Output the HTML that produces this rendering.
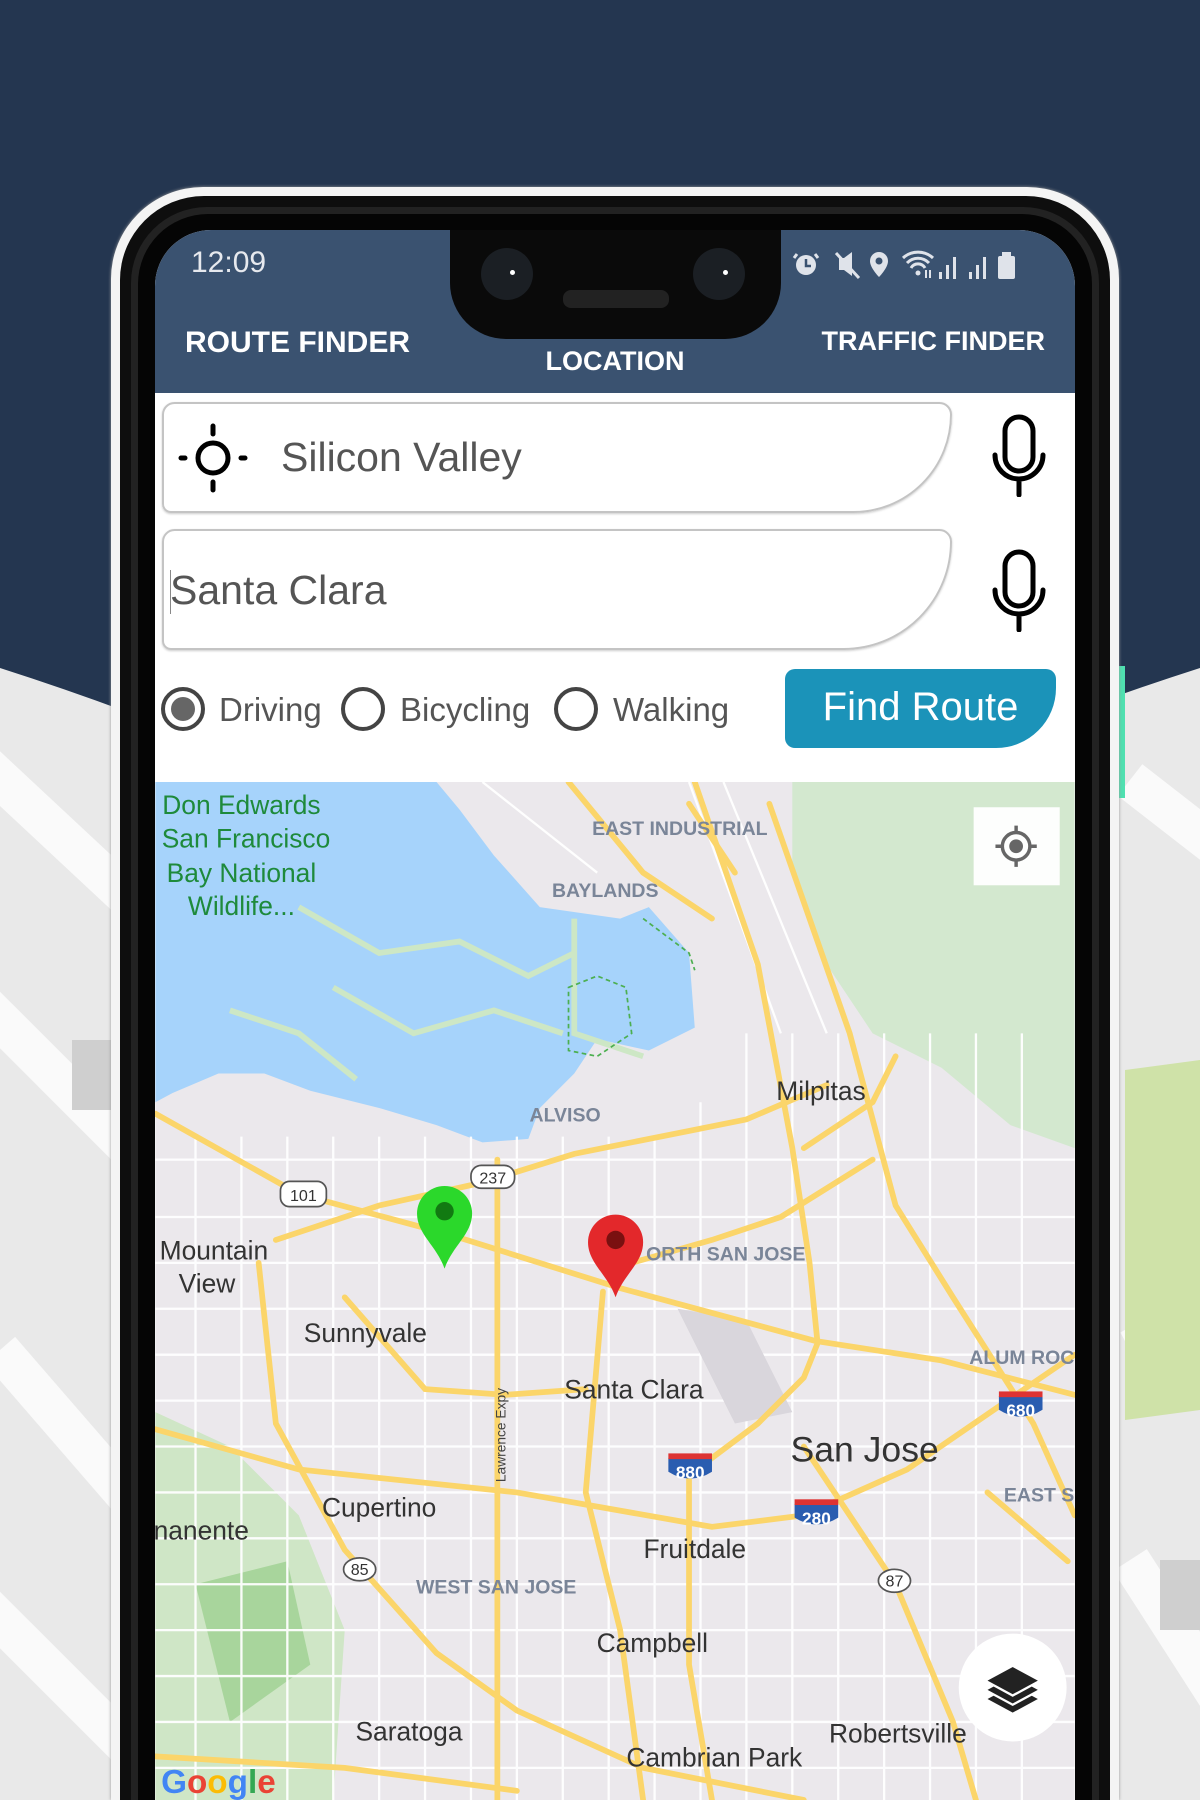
<!DOCTYPE html>
<html style="width:1200px;height:1800px;overflow:hidden"><head><meta charset="utf-8"><style>
*{margin:0;padding:0;box-sizing:border-box}
body{width:1200px;height:1800px;overflow:hidden;position:relative;background:#ececec;font-family:"Liberation Sans",sans-serif}
.abs{position:absolute}
</style></head><body>
<svg class="abs" style="left:0;top:0" width="1200" height="1800">
<rect width="1200" height="1800" fill="#e9e9e9"/>
<g stroke="#fafafa" stroke-width="40" fill="none">
<path d="M-20 760 L130 900"/><path d="M-20 1000 L130 1150"/><path d="M0 1350 L130 1500"/><path d="M-20 1600 L130 1750"/>
<path d="M1130 780 L1220 850"/><path d="M1130 1350 L1220 1300"/><path d="M1130 1560 L1220 1700"/>
</g>
<rect x="72" y="1040" width="40" height="70" fill="#cfcfcf"/>
<rect x="1160" y="1560" width="40" height="70" fill="#cfcfcf"/>
<path d="M1125 1070 L1200 1060 L1200 1410 L1125 1420 Z" fill="#cfe2a8"/>
<path d="M0 0 H1200 V668 Q1100 700 1000 740 L200 740 Q100 700 0 668 Z" fill="#243650"/>
<rect x="1119" y="666" width="6" height="132" fill="#4fe0b0"/>
</svg>
<div class="abs" style="left:111px;top:187px;width:1008px;height:1613px;background:#f4f4f4;border-radius:92px 92px 0 0;box-shadow:0 0 3px #999"></div>
<div class="abs" style="left:120px;top:196px;width:990px;height:1604px;background:#0e0e0e;border-radius:84px 84px 0 0"></div>
<div class="abs" style="left:131px;top:207px;width:968px;height:1593px;background:#222;border-radius:76px 76px 0 0"></div>
<div class="abs" style="left:138px;top:214px;width:954px;height:1586px;background:#050505;border-radius:70px 70px 0 0"></div>
<div class="abs" style="left:155px;top:230px;width:920px;height:1570px;background:#fff;border-radius:56px 56px 0 0;overflow:hidden">
 <div class="abs" style="left:0;top:0;width:920px;height:163px;background:#3a5270"></div>
 <div class="abs" style="left:295px;top:-10px;width:331px;height:119px;background:#0a0a0a;border-radius:0 0 56px 56px"></div>
 <div class="abs" style="left:326px;top:18px;width:52px;height:52px;border-radius:50%;background:#1b1f24"></div>
 <div class="abs" style="left:538px;top:18px;width:52px;height:52px;border-radius:50%;background:#1b1f24"></div>
 <div class="abs" style="left:355px;top:40px;width:5px;height:5px;border-radius:50%;background:#fff"></div>
 <div class="abs" style="left:568px;top:40px;width:5px;height:5px;border-radius:50%;background:#fff"></div>
 <div class="abs" style="left:408px;top:60px;width:106px;height:18px;border-radius:8px;background:#222"></div>
 <div class="abs" style="left:36px;top:16px;color:#e6e9ee;font-size:30px">12:09</div>
 <div class="abs" style="left:30px;top:96px;color:#fff;font-size:30px;font-weight:bold">ROUTE FINDER</div>
 <div class="abs" style="left:390px;top:116px;width:140px;color:#fff;font-size:27px;font-weight:bold;text-align:center">LOCATION</div>
 <div class="abs" style="right:30px;top:96px;color:#fff;font-size:27px;font-weight:bold">TRAFFIC FINDER</div>
 <svg class="abs" style="left:636px;top:18px" width="260" height="36" fill="#dfe3ea">
  <circle cx="15" cy="17" r="10"/><path d="M6 6 l-3 4 M24 6 l3 4" stroke="#dfe3ea" stroke-width="3"/><path d="M15 11 v7 h5" stroke="#3a5270" stroke-width="2.5" fill="none"/>
  <path d="M48 10 h5 l8 -6 v24 l-8 -6 h-5z"/><path d="M45 5 L68 30" stroke="#dfe3ea" stroke-width="3"/>
  <path d="M88 4 a9 9 0 0 1 9 9 c0 7 -9 16 -9 16 c0 0 -9 -9 -9 -16 a9 9 0 0 1 9 -9z"/><circle cx="88" cy="13" r="3.5" fill="#3a5270"/>
  <path d="M112 10 a22 22 0 0 1 30 0 M116 15 a15 15 0 0 1 22 0 M120 20 a8 8 0 0 1 14 0" stroke="#dfe3ea" stroke-width="3" fill="none"/>
  <circle cx="127" cy="25" r="2.5"/><path d="M135 22 v8 M139 30 v-8" stroke="#dfe3ea" stroke-width="2"/>
  <rect x="148" y="24" width="3" height="7"/><rect x="155" y="17" width="3" height="14"/><rect x="162" y="9" width="3" height="22"/>
  <rect x="178" y="24" width="3" height="7"/><rect x="185" y="17" width="3" height="14"/><rect x="192" y="9" width="3" height="22"/>
  <rect x="207" y="8" width="17" height="23" rx="2"/><rect x="211" y="4" width="9" height="5"/>
 </svg>
 <div class="abs" style="left:7px;top:172px;width:790px;height:111px;border:2px solid #c4c4c4;border-radius:14px 14px 110px 10px;box-shadow:0 1px 2px #ccc"></div>
 <svg class="abs" style="left:20px;top:190px" width="76" height="76" fill="none" stroke="#000" stroke-width="5" stroke-linecap="round">
  <circle cx="38" cy="38" r="15"/><path d="M38 6v8M38 62v8M6 38h4M66 38h4"/>
 </svg>
 <div class="abs" style="left:126px;top:204px;color:#555;font-size:41px">Silicon Valley</div>
 <div class="abs" style="left:7px;top:299px;width:790px;height:121px;border:2px solid #c4c4c4;border-radius:14px 14px 120px 10px;box-shadow:0 1px 2px #ccc"></div>
 <div class="abs" style="left:15px;top:340px;width:1px;height:44px;background:#888"></div>
 <div class="abs" style="left:15px;top:337px;color:#555;font-size:41px">Santa Clara</div>
 <svg class="abs" style="left:834px;top:183px" width="60" height="84" fill="none" stroke="#000" stroke-width="5" stroke-linecap="round">
  <rect x="16" y="4" width="28" height="54" rx="14"/><path d="M6 42 a24 24 0 0 0 48 0 M30 66 v16"/>
 </svg>
 <svg class="abs" style="left:834px;top:318px" width="60" height="84" fill="none" stroke="#000" stroke-width="5" stroke-linecap="round">
  <rect x="16" y="4" width="28" height="54" rx="14"/><path d="M6 42 a24 24 0 0 0 48 0 M30 66 v16"/>
 </svg>
 <svg class="abs" style="left:0;top:452px" width="460" height="54" fill="none" stroke="#444" stroke-width="4">
  <circle cx="28" cy="27" r="20"/><circle cx="28" cy="27" r="12" fill="#666" stroke="none"/>
  <circle cx="208" cy="27" r="20"/><circle cx="421" cy="27" r="20"/>
 </svg>
 <div class="abs" style="left:64px;top:461px;color:#555;font-size:33px">Driving</div>
 <div class="abs" style="left:245px;top:461px;color:#555;font-size:33px">Bicycling</div>
 <div class="abs" style="left:458px;top:461px;color:#555;font-size:33px">Walking</div>
 <div class="abs" style="left:630px;top:439px;width:271px;height:79px;background:#1b93b9;border-radius:10px 10px 60px 10px;color:#fff;font-size:40px;text-align:center;line-height:76px">Find Route</div>
</div>
<svg class="abs" style="left:155px;top:782px" width="920" height="1018" viewBox="135 681 801 887">
<rect x="135" y="681" width="801" height="887" fill="#ebe8ec"/>
<path d="M690 681 H936 V1000 L880 980 L820 930 L760 900 L720 840 L690 760 Z" fill="#d3e8cf"/>
<path d="M135 1230 L200 1260 L260 1320 L300 1420 L290 1568 H135Z" fill="#cfe6c6"/>
<path d="M170 1380 L250 1360 L270 1450 L200 1500 Z" fill="#a8d59c"/>
<path d="M135 681 H380 L400 705 L430 745 L470 790 L540 800 L565 790 L600 830 L605 895 L565 915 L520 905 L500 935 L470 965 L460 992 L420 995 L380 980 L330 965 L270 950 L230 935 L190 935 L150 952 L135 960Z" fill="#a6d3fb"/>
<g stroke="#cde7c5" stroke-width="5" fill="none">
<path d="M260 790 L330 830 L400 820 L460 850 L500 830"/><path d="M290 860 L360 900 L430 880 L490 900"/><path d="M200 880 L260 900 L310 940"/>
<path d="M500 800 L500 900 L560 920"/>
</g>
<path d="M495 860 L520 850 L545 860 L550 900 L520 920 L495 915 Z M560 800 L600 830 L605 845" stroke="#4caf50" stroke-width="1.5" stroke-dasharray="4 3" fill="none"/>
<g stroke="#ffffff" stroke-width="2" fill="none" opacity=".95">
<path d="M135 1010 H936 M135 1060 H936 M135 1100 H936 M135 1140 H936 M135 1180 H936 M135 1220 H936 M135 1260 H936 M135 1300 H936 M135 1340 H936 M135 1380 H936 M135 1420 H936 M135 1460 H936 M135 1500 H936 M135 1540 H936"/>
<path d="M170 990 V1568 M210 990 V1568 M250 990 V1568 M290 990 V1568 M330 990 V1568 M370 990 V1568 M410 990 V1568 M450 990 V1568 M490 990 V1568 M530 990 V1568 M570 990 V1568 M610 960 V1568 M650 900 V1568 M690 900 V1568 M730 900 V1568 M770 900 V1568 M810 900 V1568 M850 900 V1568 M890 900 V1568"/>
<path d="M600 681 L680 900 M630 681 L720 900 M420 681 L520 760"/>
</g>
<path d="M590 1140 L650 1150 L690 1230 L640 1240 Z" fill="#d9d6dc"/>
<g stroke="#fbd56a" stroke-width="5" fill="none" stroke-linecap="round">
<path d="M135 970 L260 1040 L390 1075 L540 1122 L710 1168 L820 1185 L936 1215"/>
<path d="M240 1080 L330 1050 L420 1030 L500 1005 L600 985 L650 975 L720 945"/>
<path d="M605 681 L660 840 L690 1000 L705 1100 L712 1170 L700 1200 L660 1240 L600 1285"/>
<path d="M495 681 L560 760 L620 800"/><path d="M640 760 L600 700"/>
<path d="M670 700 L740 900 L780 1050 L830 1130 L900 1240 L936 1320"/>
<path d="M135 1245 L260 1280 L450 1300 L620 1330 L700 1320 L790 1280 L870 1225 L936 1180"/>
<path d="M433 1010 V1568"/>
<path d="M225 1100 L240 1240 L300 1350 L380 1440 L450 1490 L560 1540 L700 1568"/>
<path d="M700 1260 L780 1380 L830 1500 L850 1568"/>
<path d="M525 1125 L510 1300 L540 1420 L560 1568"/>
<path d="M600 1280 L600 1450 L620 1568"/>
<path d="M300 1130 L370 1210 L440 1215 L510 1210"/>
<path d="M700 1000 L760 960 L780 920"/>
<path d="M135 1530 L300 1540 L450 1560"/>
<path d="M860 1300 L930 1360"/>
<path d="M550 1100 L620 1080 L680 1060 L760 1010"/>
</g>
<g font-family="Liberation Sans" text-anchor="middle">
<g fill="#1e8a3b" font-size="23"><text x="210" y="709">Don Edwards</text><text x="214" y="738">San Francisco</text><text x="210" y="768">Bay National</text><text x="210" y="797">Wildlife...</text></g>
<g fill="#7a8598" font-size="17" font-weight="bold"><text x="592" y="727">EAST INDUSTRIAL</text><text x="527" y="781">BAYLANDS</text><text x="492" y="977">ALVISO</text><text x="632" y="1098">ORTH SAN JOSE</text><text x="890" y="1188">ALUM ROC</text><text x="432" y="1388">WEST SAN JOSE</text><text x="905" y="1308">EAST S</text></g>
<g fill="#333" font-size="23"><text x="715" y="958">Milpitas</text><text x="186" y="1097">Mountain</text><text x="180" y="1126">View</text><text x="318" y="1169">Sunnyvale</text><text x="552" y="1218">Santa Clara</text><text x="330" y="1321">Cupertino</text><text x="175" y="1341">nanente</text><text x="605" y="1357">Fruitdale</text><text x="568" y="1439">Campbell</text><text x="356" y="1516">Saratoga</text><text x="782" y="1518">Robertsville</text><text x="622" y="1539">Cambrian Park</text></g>
<text x="753" y="1273" fill="#333" font-size="31">San Jose</text>
<text x="440" y="1250" fill="#444" font-size="12" transform="rotate(-90 440 1250)">Lawrence Expy</text>
</g>
<g font-family="Liberation Sans" font-size="14" text-anchor="middle" fill="#333">
<rect x="244" y="1029" width="40" height="22" rx="8" fill="#fff" stroke="#555" stroke-width="1.5"/><text x="264" y="1046">101</text>
<rect x="410" y="1015" width="38" height="20" rx="9" fill="#fff" stroke="#555" stroke-width="1.5"/><text x="429" y="1031">237</text>
<ellipse cx="313" cy="1367" rx="14" ry="10" fill="#fff" stroke="#555" stroke-width="1.5"/><text x="313" y="1372">85</text>
<ellipse cx="779" cy="1377" rx="14" ry="10" fill="#fff" stroke="#555" stroke-width="1.5"/><text x="779" y="1382">87</text>
</g>
<g font-family="Liberation Sans" font-size="15" font-weight="bold" text-anchor="middle" fill="#fff">
<path d="M582 1270 h38 v12 q-19 12 -38 0z" fill="#2a5db0"/><rect x="582" y="1266" width="38" height="5" fill="#d33"/><text x="601" y="1288">880</text>
<path d="M692 1310 h38 v12 q-19 12 -38 0z" fill="#2a5db0"/><rect x="692" y="1306" width="38" height="5" fill="#d33"/><text x="711" y="1328">280</text>
<path d="M870 1216 h38 v12 q-19 12 -38 0z" fill="#2a5db0"/><rect x="870" y="1212" width="38" height="5" fill="#d33"/><text x="889" y="1234">680</text>
</g>
<path d="M387 1105 C380 1085 363 1075 363 1057 a24 24 0 0 1 48 0 C411 1075 394 1085 387 1105Z" fill="#2bd82b"/>
<circle cx="387" cy="1055" r="8" fill="#127a12"/>
<path d="M536 1130 C529 1110 512 1100 512 1082 a24 24 0 0 1 48 0 C560 1100 543 1110 536 1130Z" fill="#e3282b"/>
<circle cx="536" cy="1080" r="8" fill="#7a1010"/>
<rect x="848" y="703" width="75" height="68" fill="#fff" opacity=".95"/>
<circle cx="885" cy="737" r="12" fill="none" stroke="#666" stroke-width="3"/><circle cx="885" cy="737" r="6" fill="#666"/>
<path d="M885 719v6M885 749v6M867 737h6M897 737h6" stroke="#666" stroke-width="3"/>
<circle cx="882" cy="1470" r="47" fill="#fff"/>
<g fill="#222" stroke="#fff" stroke-width="2"><path d="M858 1480 l24 13 l24 -13 l-24 -13z"/><path d="M858 1472 l24 13 l24 -13 l-24 -13z"/><path d="M858 1464 l24 13 l24 -13 l-24 -13z"/></g>
<text x="140" y="1562" font-family="Liberation Sans" font-size="29" font-weight="bold"><tspan fill="#4285f4">G</tspan><tspan fill="#ea4335">o</tspan><tspan fill="#fbbc05">o</tspan><tspan fill="#4285f4">g</tspan><tspan fill="#34a853">l</tspan><tspan fill="#ea4335">e</tspan></text>
</svg>
</body></html>
